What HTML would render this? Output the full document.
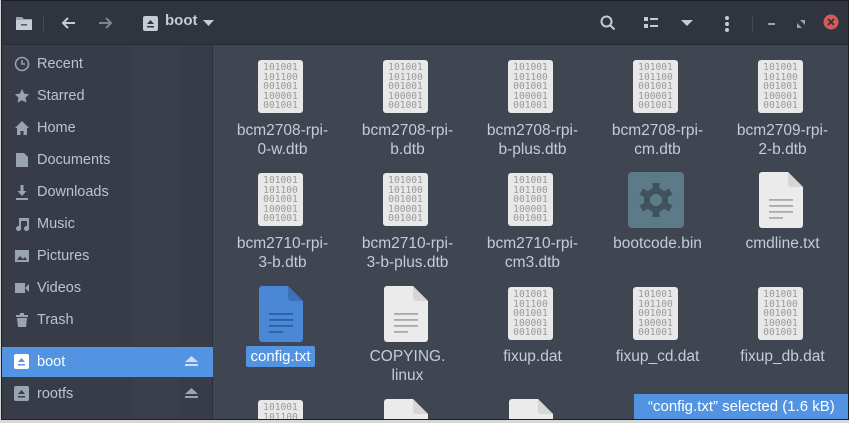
<!DOCTYPE html>
<html><head><meta charset="utf-8"><style>
*{margin:0;padding:0;box-sizing:border-box}
html,body{width:849px;height:423px;overflow:hidden}
body{background:#d8d8d8;font-family:"Liberation Sans","DejaVu Sans",sans-serif;position:relative}
#win{position:absolute;left:1px;top:0;width:848px;height:420px;background:#404552;border:1px solid #1e2028;overflow:hidden}
#hdr{position:absolute;left:0;top:0;right:0;height:44px;background:#2f343f;border-bottom:1px solid #262a33}
#side{position:absolute;left:0;top:44px;width:211px;bottom:0;background:#383c48;border-right:1px solid #2b2e38}
#stripe{position:absolute;left:130px;top:44px;width:48px;bottom:0;background:#3b3f4b}
.si{position:absolute;left:0;width:211px;height:30px;color:#bac3cf;font-size:14.5px;line-height:30px;padding-left:35px}
.si svg{position:absolute;left:12px;top:7px}
.sel{background:#5294e2;color:#fff}
.it{position:absolute;width:125px;text-align:center;color:#c5ccd6;font-size:15.5px;line-height:19px;white-space:nowrap}
.bin{position:absolute;width:45px;height:53px;background:#e8e8e8;border-radius:3px;font-family:"DejaVu Sans Mono","Liberation Mono",monospace;font-size:9.6px;line-height:9.6px;color:#9a9a9a;text-align:center;padding-top:3px;overflow:hidden}
.doc{position:absolute}
#status{position:absolute;left:632px;top:393px;width:216px;height:26px;background:#5294e2;color:#fff;font-size:15px;line-height:26px;padding-left:14px;white-space:nowrap}
</style></head><body>
<div id="win">
<div id="hdr">
 <svg style="position:absolute;left:13px;top:13px" width="18" height="18"><path d="M1 3h6l2 2h8v11H1z" fill="#9aa3b0"/><rect x="1" y="6" width="16" height="10" fill="#c5ccd6"/><rect x="6" y="10" width="6" height="1.5" fill="#555"/></svg>
 <div style="position:absolute;left:41px;top:14px;width:1px;height:16px;background:#454a56"></div>
 <svg style="position:absolute;left:59px;top:15px" width="16" height="14"><path d="M14 7H2M7 2L2 7l5 5" stroke="#c5ccd6" stroke-width="2" fill="none"/></svg>
 <svg style="position:absolute;left:95px;top:15px" width="16" height="14"><path d="M2 7h12M9 2l5 5-5 5" stroke="#7c8491" stroke-width="2" fill="none"/></svg>
 <svg style="position:absolute;left:141px;top:15px" width="15" height="15"><rect width="15" height="15" rx="2" fill="#c5ccd6"/><path d="M4 8l3.5-4 3.5 4z M4 10h7v1.5H4z" fill="#2f343f"/></svg>
 <div style="position:absolute;left:163px;top:11px;color:#c5ccd6;font-size:15px;font-weight:bold">boot</div>
 <svg style="position:absolute;left:201px;top:19px" width="11" height="7"><path d="M0 0h11L5.5 6z" fill="#c5ccd6"/></svg>
 <svg style="position:absolute;left:598px;top:14px" width="16" height="16"><circle cx="6.5" cy="6.5" r="5" stroke="#c5ccd6" stroke-width="2" fill="none"/><path d="M10 10l4.5 4.5" stroke="#c5ccd6" stroke-width="2"/></svg>
 <svg style="position:absolute;left:642px;top:16px" width="14" height="12"><rect x="0" y="0" width="4" height="4" fill="#c5ccd6"/><rect x="0" y="7" width="4" height="4" fill="#c5ccd6"/><rect x="6" y="1" width="8" height="2" fill="#c5ccd6"/><rect x="6" y="8" width="8" height="2" fill="#c5ccd6"/></svg>
 <svg style="position:absolute;left:679px;top:19px" width="12" height="7"><path d="M0 0h12L6 6z" fill="#c5ccd6"/></svg>
 <svg style="position:absolute;left:722px;top:14px" width="6" height="18"><circle cx="3" cy="3" r="2" fill="#c5ccd6"/><circle cx="3" cy="9" r="2" fill="#c5ccd6"/><circle cx="3" cy="15" r="2" fill="#c5ccd6"/></svg>
 <div style="position:absolute;left:750px;top:15px;width:1px;height:16px;background:#454a56"></div>
 <div style="position:absolute;left:766px;top:22px;width:7px;height:2px;background:#9aa3b0"></div>
 <svg style="position:absolute;left:795px;top:19px" width="8" height="8"><path d="M3 0h5v5z M0 3v5h5z" fill="#9aa3b0"/></svg>
 <svg style="position:absolute;left:821px;top:13px" width="16" height="16"><circle cx="8" cy="8" r="7.5" fill="#d75a5a"/><path d="M5 5l6 6M11 5l-6 6" stroke="#2f343f" stroke-width="1.8"/></svg>
</div>
<div id="side"></div><div id="stripe"></div>
<div class="si" style="top:48px"><svg width="16" height="16"><circle cx="8" cy="8" r="6.5" stroke="#9aa3b0" stroke-width="1.6" fill="none"/><path d="M8 4v4h3" stroke="#9aa3b0" stroke-width="1.5" fill="none"/></svg>Recent</div>
<div class="si" style="top:80px"><svg width="16" height="16"><path d="M8 1l2.2 4.6 5 .6-3.7 3.4 1 5L8 12.2 3.5 14.6l1-5L.8 6.2l5-.6z" fill="#9aa3b0"/></svg>Starred</div>
<div class="si" style="top:112px"><svg width="16" height="16"><path d="M8 1l7 7h-2v7H9.5v-4h-3v4H3V8H1z" fill="#9aa3b0"/></svg>Home</div>
<div class="si" style="top:144px"><svg width="16" height="16"><path d="M2 1h8l4 4v10H2z" fill="#9aa3b0"/></svg>Documents</div>
<div class="si" style="top:176px"><svg width="16" height="16"><path d="M6.5 1h3v6h3L8 12 3.5 7h3z M2 14h12v2H2z" fill="#9aa3b0"/></svg>Downloads</div>
<div class="si" style="top:208px"><svg width="16" height="16"><path d="M5 2h10v10.5a2.5 2.5 0 1 1-2-2.4V5H7v7.5a2.5 2.5 0 1 1-2-2.4z" fill="#9aa3b0"/></svg>Music</div>
<div class="si" style="top:240px"><svg width="16" height="16"><rect x="1" y="2" width="14" height="12" fill="#9aa3b0"/><path d="M3 12l3-4 3 3 2-2 2 3z" fill="#383c48"/></svg>Pictures</div>
<div class="si" style="top:272px"><svg width="16" height="16"><rect x="1" y="3" width="10" height="10" fill="#9aa3b0"/><path d="M11 8l4-4v8z" fill="#9aa3b0"/></svg>Videos</div>
<div class="si" style="top:304px"><svg width="16" height="16"><path d="M2 3h12v2H2z M6 1h4v2H6z M3 6h10l-1 9H4z" fill="#9aa3b0"/></svg>Trash</div>
<div class="si sel" style="top:346px"><svg width="15" height="15"><rect width="15" height="15" rx="2" fill="#fff"/><path d="M4 8l3.5-4 3.5 4z M4 10h7v1.5H4z" fill="#5294e2"/></svg>boot<svg style="left:183px;top:9px" width="13" height="11"><path d="M0 6l6.5-6 6.5 6z M0 8h13v2H0z" fill="#cfe0f5"/></svg></div>
<div class="si" style="top:378px"><svg width="15" height="15"><rect width="15" height="15" rx="2" fill="#9aa3b0"/><path d="M4 8l3.5-4 3.5 4z M4 10h7v1.5H4z" fill="#383c48"/></svg>rootfs<svg style="left:183px;top:9px" width="13" height="11"><path d="M0 6l6.5-6 6.5 6z M0 8h13v2H0z" fill="#9aa3b0"/></svg></div>

<div class="bin" style="left:256px;top:59px">101001<br>101100<br>001001<br>100001<br>001001</div>
<div class="it" style="left:218px;top:120px">bcm2708-rpi-<br>0-w.dtb</div>
<div class="bin" style="left:381px;top:59px">101001<br>101100<br>001001<br>100001<br>001001</div>
<div class="it" style="left:343px;top:120px">bcm2708-rpi-<br>b.dtb</div>
<div class="bin" style="left:506px;top:59px">101001<br>101100<br>001001<br>100001<br>001001</div>
<div class="it" style="left:468px;top:120px">bcm2708-rpi-<br>b-plus.dtb</div>
<div class="bin" style="left:631px;top:59px">101001<br>101100<br>001001<br>100001<br>001001</div>
<div class="it" style="left:593px;top:120px">bcm2708-rpi-<br>cm.dtb</div>
<div class="bin" style="left:756px;top:59px">101001<br>101100<br>001001<br>100001<br>001001</div>
<div class="it" style="left:718px;top:120px">bcm2709-rpi-<br>2-b.dtb</div>

<div class="bin" style="left:256px;top:172px">101001<br>101100<br>001001<br>100001<br>001001</div>
<div class="it" style="left:218px;top:233px">bcm2710-rpi-<br>3-b.dtb</div>
<div class="bin" style="left:381px;top:172px">101001<br>101100<br>001001<br>100001<br>001001</div>
<div class="it" style="left:343px;top:233px">bcm2710-rpi-<br>3-b-plus.dtb</div>
<div class="bin" style="left:506px;top:172px">101001<br>101100<br>001001<br>100001<br>001001</div>
<div class="it" style="left:468px;top:233px">bcm2710-rpi-<br>cm3.dtb</div>
<svg class="doc" style="left:626px;top:171px" width="56" height="56"><rect width="56" height="56" rx="4" fill="#5d7a88"/><g fill="#3f525e" transform="translate(28,28)"><circle r="12"/><g id="t"><rect x="-3.5" y="-17" width="7" height="8"/></g><use href="#t" transform="rotate(60)"/><use href="#t" transform="rotate(120)"/><use href="#t" transform="rotate(180)"/><use href="#t" transform="rotate(240)"/><use href="#t" transform="rotate(300)"/></g><circle cx="28" cy="28" r="6" fill="#5d7a88"/></svg>
<div class="it" style="left:593px;top:233px">bootcode.bin</div>
<svg class="doc" style="left:757px;top:171px" width="45" height="56"><path d="M3 0h26l15 15v38a3 3 0 0 1-3 3H3a3 3 0 0 1-3-3V3a3 3 0 0 1 3-3z" fill="#ebebeb"/><path d="M29 0v12a3 3 0 0 0 3 3h12z" fill="#d6d6d6"/><g fill="#aaa"><rect x="10" y="27" width="24" height="1.8"/><rect x="10" y="33" width="24" height="1.8"/><rect x="10" y="39" width="24" height="1.8"/><rect x="10" y="45" width="14" height="1.8"/></g></svg>
<div class="it" style="left:718px;top:233px">cmdline.txt</div>

<svg class="doc" style="left:257px;top:285px" width="45" height="56"><path d="M3 0h26l15 15v38a3 3 0 0 1-3 3H3a3 3 0 0 1-3-3V3a3 3 0 0 1 3-3z" fill="#4a88d6"/><path d="M29 0v12a3 3 0 0 0 3 3h12z" fill="#3a72ba"/><g fill="#2f5f9e"><rect x="10" y="27" width="24" height="1.8"/><rect x="10" y="33" width="24" height="1.8"/><rect x="10" y="39" width="24" height="1.8"/><rect x="10" y="45" width="14" height="1.8"/></g></svg>
<div style="position:absolute;left:244px;top:345px;width:69px;height:21px;background:#5294e2;border-radius:2px;color:#fff;font-size:15px;line-height:21px;text-align:center;white-space:nowrap">config.txt</div>
<svg class="doc" style="left:382px;top:285px" width="45" height="56"><path d="M3 0h26l15 15v38a3 3 0 0 1-3 3H3a3 3 0 0 1-3-3V3a3 3 0 0 1 3-3z" fill="#ebebeb"/><path d="M29 0v12a3 3 0 0 0 3 3h12z" fill="#d6d6d6"/><g fill="#aaa"><rect x="10" y="27" width="24" height="1.8"/><rect x="10" y="33" width="24" height="1.8"/><rect x="10" y="39" width="24" height="1.8"/><rect x="10" y="45" width="14" height="1.8"/></g></svg>
<div class="it" style="left:343px;top:346px">COPYING.<br>linux</div>
<div class="bin" style="left:506px;top:286px">101001<br>101100<br>001001<br>100001<br>001001</div>
<div class="it" style="left:468px;top:346px">fixup.dat</div>
<div class="bin" style="left:631px;top:286px">101001<br>101100<br>001001<br>100001<br>001001</div>
<div class="it" style="left:593px;top:346px">fixup_cd.dat</div>
<div class="bin" style="left:756px;top:286px">101001<br>101100<br>001001<br>100001<br>001001</div>
<div class="it" style="left:718px;top:346px">fixup_db.dat</div>

<div class="bin" style="left:256px;top:399px;height:21px">101001<br>101100</div>
<svg class="doc" style="left:382px;top:398px" width="45" height="22"><path d="M3 0h26l15 15v38H0V3a3 3 0 0 1 3-3z" fill="#ebebeb"/><path d="M29 0v12a3 3 0 0 0 3 3h12z" fill="#d6d6d6"/></svg>
<svg class="doc" style="left:507px;top:398px" width="45" height="22"><path d="M3 0h26l15 15v38H0V3a3 3 0 0 1 3-3z" fill="#ebebeb"/><path d="M29 0v12a3 3 0 0 0 3 3h12z" fill="#d6d6d6"/></svg>
<div id="status">“config.txt” selected  (1.6 kB)</div>
</div>
</body></html>
